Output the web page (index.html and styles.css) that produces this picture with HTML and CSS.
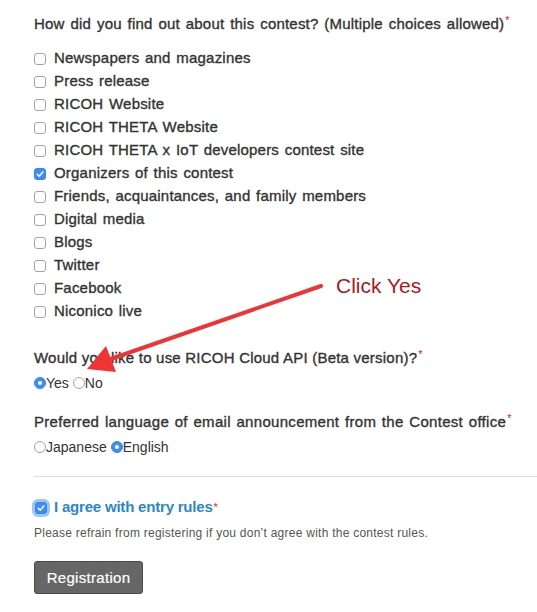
FILE: index.html
```html
<!DOCTYPE html>
<html>
<head>
<meta charset="utf-8">
<link rel="stylesheet" href="styles.css">
</head>
<body>
<div class="page">
  <form class="form">
    <div class="q q-first">How did you find out about this contest? (Multiple choices allowed)<span class="req">*</span></div>
    <ul class="checks">
      <li><span class="cb"></span>Newspapers and magazines</li>
      <li><span class="cb"></span>Press release</li>
      <li><span class="cb"></span>RICOH Website</li>
      <li><span class="cb"></span>RICOH THETA Website</li>
      <li><span class="cb"></span>RICOH THETA x IoT developers contest site</li>
      <li><span class="cb cb-on"><svg viewBox="0 0 12 12"><path d="M3.2 6.3 L5.2 8.2 L8.8 3.9" fill="none" stroke="#fff" stroke-width="1.5" stroke-linecap="round" stroke-linejoin="round"/></svg></span>Organizers of this contest</li>
      <li><span class="cb"></span>Friends, acquaintances, and family members</li>
      <li><span class="cb"></span>Digital media</li>
      <li><span class="cb"></span>Blogs</li>
      <li><span class="cb"></span>Twitter</li>
      <li><span class="cb"></span>Facebook</li>
      <li><span class="cb"></span>Niconico live</li>
    </ul>

    <div class="q q-api">Would you like to use RICOH Cloud API (Beta version)?<span class="req">*</span></div>
    <div class="radios">
      <span class="rd rd-on"></span><span class="rl">Yes</span>
      <span class="rd rd-gap"></span><span class="rl">No</span>
    </div>

    <div class="q q-lang">Preferred language of email announcement from the Contest office<span class="req">*</span></div>
    <div class="radios">
      <span class="rd"></span><span class="rl">Japanese</span>
      <span class="rd rd-on rd-gap"></span><span class="rl">English</span>
    </div>

    <hr class="sep">

    <div class="agree"><span class="cb cb-on cb-focus"><svg viewBox="0 0 12 12"><path d="M3.2 6.3 L5.2 8.2 L8.8 3.9" fill="none" stroke="#fff" stroke-width="1.5" stroke-linecap="round" stroke-linejoin="round"/></svg></span><span class="agree-text">I agree with entry rules</span><span class="req">*</span></div>
    <p class="help">Please refrain from registering if you don’t agree with the contest rules.</p>
    <button type="button" class="btn">Registration</button>
  </form>

  <svg class="arrow" width="537" height="612" viewBox="0 0 537 612">
    <line x1="321" y1="286" x2="102" y2="362" stroke="#ee3535" stroke-width="4" stroke-linecap="round"/>
    <polygon points="87,369 106,346 116,372" fill="#ee3535"/>
  </svg>
  <div class="note">Click Yes</div>
</div>
</body>
</html>
```

FILE: styles.css
```css
html, body {
  margin: 0;
  padding: 0;
  background: #fff;
}
.page {
  position: relative;
  width: 537px;
  height: 612px;
  overflow: hidden;
  font-family: "Liberation Sans", Arial, sans-serif;
  color: #333;
}
.form {
  padding: 9px 0 0 34px;
}
.q {
  font-size: 15px;
  line-height: 23px;
  color: #333;
  -webkit-text-stroke: 0.35px #333;
}
.q-first {
  letter-spacing: 0.2px;
  word-spacing: 1.5px;
}
.req {
  color: #e8101a;
  font-size: 11px;
  vertical-align: 5px;
  margin-left: 1px;
  letter-spacing: 0;
  -webkit-text-stroke: 0;
}
.checks {
  list-style: none;
  margin: 11px 0 0 0;
  padding: 0;
}
.checks li {
  display: flex;
  align-items: center;
  height: 23px;
  font-size: 15px;
  letter-spacing: 0.2px;
  word-spacing: 1.3px;
  white-space: pre;
  -webkit-text-stroke: 0.35px #333;
}
.cb {
  box-sizing: border-box;
  width: 12px;
  height: 12px;
  border: 1px solid #a4a4a4;
  border-radius: 3px;
  background: #fff;
  margin-right: 8px;
  flex: none;
  display: inline-flex;
  margin-top: 2px;
}
.cb svg {
  width: 12px;
  height: 12px;
  margin: -1px;
}
.cb-on {
  background: #3d8ef3;
  border-color: #3585ec;
}
.cb-focus {
  box-shadow: 0 0 0 3px #9ec6f7;
}
.q-api {
  margin-top: 21px;
  letter-spacing: 0.22px;
}
.q-lang {
  margin-top: 13px;
  letter-spacing: 0.3px;
  word-spacing: 1.2px;
}
.radios {
  margin-top: 2px;
  display: flex;
  align-items: center;
  height: 23px;
  font-size: 14px;
  color: #333;
}
.rd {
  box-sizing: border-box;
  width: 12px;
  height: 12px;
  border-radius: 50%;
  border: 1px solid #a4a4a4;
  background: #fff;
  flex: none;
  margin-top: 1px;
  position: relative;
}
.rd-on {
  background: #3d8ef3;
  border-color: #3585ec;
}
.rd-on::after {
  content: "";
  position: absolute;
  left: 3px;
  top: 3px;
  width: 4px;
  height: 4px;
  border-radius: 50%;
  background: #fff;
}
.rd-gap {
  margin-left: 4px;
}
.sep {
  border: 0;
  border-top: 1px solid #ddd;
  margin: 18px 0 0 0;
  height: 0;
}
.agree {
  margin-top: 18px;
  display: flex;
  align-items: center;
  height: 23px;
  font-size: 15px;
}
.agree .cb {
  margin-left: 1px;
  margin-right: 7px;
}
.agree-text {
  color: #2a87c9;
  font-weight: bold;
  letter-spacing: -0.2px;
}
.help {
  margin: 7px 0 0 0;
  font-size: 12px;
  line-height: 16px;
  letter-spacing: 0.25px;
  color: #555;
}
.btn {
  margin-top: 20px;
  width: 109px;
  height: 33px;
  background: #666;
  border: 1px solid #4a4a4a;
  border-radius: 3px;
  color: #fff;
  font-family: "Liberation Sans", Arial, sans-serif;
  font-size: 15px;
  letter-spacing: 0.3px;
  padding: 0;
  -webkit-text-stroke: 0.2px #fff;
}
.arrow {
  position: absolute;
  left: 0;
  top: 0;
  pointer-events: none;
}
.note {
  position: absolute;
  left: 336px;
  top: 274px;
  font-size: 21px;
  line-height: 24px;
  color: #a81a1a;
}
```
